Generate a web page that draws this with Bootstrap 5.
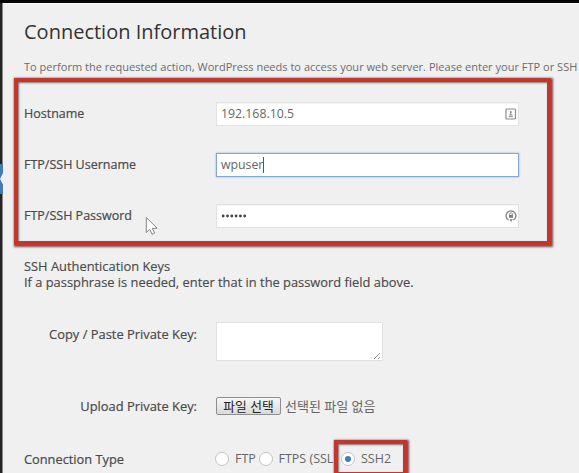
<!DOCTYPE html>
<html lang="en">
<head>
<meta charset="utf-8">
<meta name="viewport" content="width=device-width, initial-scale=1">
<title>Connection Information</title>
<link href="https://cdn.jsdelivr.net/npm/bootstrap@5.3.0/dist/css/bootstrap.min.css" rel="stylesheet">
<style>
html, body { height: 473px; overflow: hidden; }
body { font-family: "Open Sans", "Noto Sans CJK KR", sans-serif; font-size: 12px; line-height: 16px; color: #444; background: #f0f0f0; }
.topbar { height: 3px; background: #050505; flex: none; }
.siderail { width: 3px; flex: none; background: #242424; border-right: 1px solid #8a8a8a; }
.rail-gap { height: 161px; }
.rail-here { background: #f0f0f0; height: 30px; width: 3px; }
.rail-active { height: 30px; background: #457bad; clip-path: polygon(0 0, 100% 0, 100% 30%, 0 50%, 100% 68%, 100% 100%, 0 100%); }
.panel { padding-left: 21px; border-top: 1px solid #fbfbfb; overflow: hidden; }
.title { font-size: 20px; line-height: 30px; height: 57px; padding-top: 13px; color: #333; font-weight: 400; }
.intro { font-size: 11px; height: 27px; line-height: 12px; letter-spacing: .02px; color: #6c6c6c; white-space: nowrap; }
.field-row { height: 51.3px; }
.label-col { width: 192px; flex: none; font-size: 12.5px; color: #4a4a4a; -webkit-text-stroke: .2px #4a4a4a; white-space: nowrap; }
.label-col.sub { width: 173px; margin-right: 19px; text-align: right; font-size: 12.9px; }
.field { width: 303px; height: 24px; border: 1px solid #e2e2e2; padding: 0 1px 0 4px; font-size: 12.3px; color: #666; background: #fff; box-shadow: inset 0 1px 1px #f4f4f4; }
.field.active-field { border-color: #84a8d3; box-shadow: 0 0 2px #82b3e0; }
.caret { width: 1px; height: 16px; background: #555; }
.keys { height: 64px; padding-top: 16px; font-size: 12.87px; line-height: 16px; color: #4a4a4a; -webkit-text-stroke: .15px #4a4a4a; white-space: nowrap; }
.keybox { width: 167px; height: 39px; border: 1px solid #e0e0e0; background: #fff; }
.upload-row { height: 18px; margin-top: 36px; }
.connect-row { height: 18px; margin-top: 35px; }
.connect-row .label-col { font-size: 12.8px; }
.filebtn { width: 65px; height: 18px; border: 1px solid #8f8f8f; border-radius: 2px; background: linear-gradient(#f6f6f6, #dadada); color: #222; font-size: 12.8px; line-height: 16px; padding: 0; }
.filetext { color: #666; margin-left: 4px; font-size: 13px; }
.dot { width: 14px; height: 14px; border: 1px solid #c2c2c2; border-radius: 50%; background: #fff; flex: none; }
.dot.on::after { content: ""; display: block; width: 6px; height: 6px; margin: 3px; border-radius: 50%; background: #3f7fb5; }
.choices { color: #666; white-space: nowrap; margin-left: -1px; font-size: 12.5px; }
.choice { gap: 6px; }
.ftp { width: 43.5px; }
.ftps { width: 82.5px; }
.callout { border: 4px solid #c5352b; box-shadow: 1px 1px 2px 1px #6a5654, inset 1px 1px 2px #777; pointer-events: none; }
.callout-fields { left: 14px; top: 78px; width: 537px; height: 167px; }
.callout-ssh { left: 334px; top: 440px; width: 73px; height: 36px; }
.pointer { left: 145px; top: 216px; }
</style>
<script src="https://cdn.jsdelivr.net/npm/bootstrap@5.3.0/dist/js/bootstrap.bundle.min.js"></script>
</head>
<body class="d-flex flex-column position-relative m-0">
<div class="topbar"></div>
<div class="d-flex flex-grow-1">
  <aside class="siderail"><div class="rail-gap"></div><div class="rail-here"><div class="rail-active"></div></div></aside>
  <main class="panel flex-grow-1">
    <h1 class="title m-0">Connection Information</h1>
    <p class="intro m-0">To perform the requested action, WordPress needs to access your web server. Please enter your FTP or SSH</p>
    <div class="field-row d-flex align-items-center">
      <label class="label-col">Hostname</label>
      <div class="field d-flex align-items-center justify-content-between"><span>192.168.10.5</span>
        <svg width="12" height="12" viewBox="0 0 12 12" fill="none" stroke="#8c8c8c"><rect x="1" y="1" width="9.5" height="10" rx=".8" stroke-width="1.2"/><circle cx="5.8" cy="4" r="1" fill="#8c8c8c" stroke="none"/><path d="M5.8 4v3M4 7h3.6M3.8 8.7h4"/></svg>
      </div>
    </div>
    <div class="field-row d-flex align-items-center">
      <label class="label-col">FTP/SSH Username</label>
      <div class="field active-field d-flex align-items-center"><span>wpuser</span><span class="caret"></span></div>
    </div>
    <div class="field-row d-flex align-items-center">
      <label class="label-col">FTP/SSH Password</label>
      <div class="field d-flex align-items-center justify-content-between">
        <svg width="28" height="6" viewBox="0 0 28 6" fill="#444"><circle cx="2.2" cy="3" r="1.4"/><circle cx="6.5" cy="3" r="1.4"/><circle cx="10.8" cy="3" r="1.4"/><circle cx="15.1" cy="3" r="1.4"/><circle cx="19.4" cy="3" r="1.4"/><circle cx="23.7" cy="3" r="1.4"/></svg>
        <svg width="12" height="12" viewBox="0 0 12 12" fill="none" stroke="#858585"><path d="M3.6 10A4.9 4.9 0 1 1 8.4 10" stroke-width="1.4"/><path d="M4.6 5V4.2a1.4 1.4 0 0 1 2.8 0V5" stroke-width=".8"/><path d="M4 5h4v2.8H4zM4.6 9.2h3.2L6 12z" fill="#7c7c7c" stroke="none"/></svg>
      </div>
    </div>
    <div class="keys">SSH Authentication Keys<br>If a passphrase is needed, enter that in the password field above.</div>
    <div class="d-flex mt-3">
      <label class="label-col sub pt-1">Copy / Paste Private Key:</label>
      <div class="keybox d-flex align-items-end justify-content-end"><svg width="9" height="9" viewBox="0 0 9 9" stroke="#858585" stroke-width=".9"><path d="M1 8L7 2M5 8l2-2"/></svg></div>
    </div>
    <div class="upload-row d-flex align-items-center">
      <label class="label-col sub">Upload Private Key:</label>
      <button class="filebtn" type="button">파일 선택</button><span class="filetext">선택된 파일 없음</span>
    </div>
    <div class="connect-row d-flex align-items-center">
      <label class="label-col">Connection Type</label>
      <div class="choices d-flex align-items-center">
        <span class="choice ftp d-flex align-items-center"><span class="dot"></span>FTP</span>
        <span class="choice ftps d-flex align-items-center"><span class="dot"></span>FTPS (SSL</span>
        <span class="choice d-flex align-items-center"><span class="dot on"></span>SSH2</span>
      </div>
    </div>
  </main>
</div>
<div class="callout callout-fields position-absolute"></div>
<div class="callout callout-ssh position-absolute"></div>
<svg class="pointer position-absolute" width="14" height="20" viewBox="0 0 14 20"><path d="M1.3 1.5v15l3.4-3.2 2.4 5 2.5-1.2-2.3-4.7 4.8-.2z" fill="#fff" stroke="#777" stroke-width=".9"/></svg>
</body>
</html>
